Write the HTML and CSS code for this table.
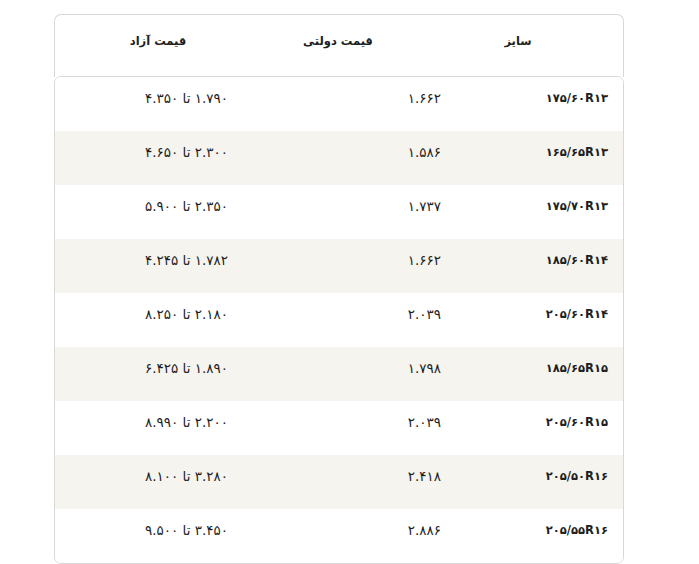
FILE: index.html
```html
<!DOCTYPE html>
<html lang="fa" dir="rtl">
<head>
<meta charset="utf-8">
<title>قیمت لاستیک</title>
<link rel="stylesheet" href="styles.css">
</head>
<body>
<div class="wrap">
  <div class="head">
    <div class="hcell">سایز</div>
    <div class="hcell">قیمت دولتی</div>
    <div class="hcell">قیمت آزاد</div>
  </div>
  <div class="tbody">
    <div class="row"><div class="cell size"><span class="ltr">۱۷۵/۶۰R۱۳</span></div><div class="cell">۱.۶۶۲</div><div class="cell">۱.۷۹۰ تا ۴.۳۵۰</div></div>
    <div class="row alt"><div class="cell size"><span class="ltr">۱۶۵/۶۵R۱۳</span></div><div class="cell">۱.۵۸۶</div><div class="cell">۲.۳۰۰ تا ۴.۶۵۰</div></div>
    <div class="row"><div class="cell size"><span class="ltr">۱۷۵/۷۰R۱۳</span></div><div class="cell">۱.۷۳۷</div><div class="cell">۲.۳۵۰ تا ۵.۹۰۰</div></div>
    <div class="row alt"><div class="cell size"><span class="ltr">۱۸۵/۶۰R۱۴</span></div><div class="cell">۱.۶۶۲</div><div class="cell">۱.۷۸۲ تا ۴.۲۴۵</div></div>
    <div class="row"><div class="cell size"><span class="ltr">۲۰۵/۶۰R۱۴</span></div><div class="cell">۲.۰۳۹</div><div class="cell">۲.۱۸۰ تا ۸.۲۵۰</div></div>
    <div class="row alt"><div class="cell size"><span class="ltr">۱۸۵/۶۵R۱۵</span></div><div class="cell">۱.۷۹۸</div><div class="cell">۱.۸۹۰ تا ۶.۴۲۵</div></div>
    <div class="row"><div class="cell size"><span class="ltr">۲۰۵/۶۰R۱۵</span></div><div class="cell">۲.۰۳۹</div><div class="cell">۲.۲۰۰ تا ۸.۹۹۰</div></div>
    <div class="row alt"><div class="cell size"><span class="ltr">۲۰۵/۵۰R۱۶</span></div><div class="cell">۲.۴۱۸</div><div class="cell">۳.۲۸۰ تا ۸.۱۰۰</div></div>
    <div class="row"><div class="cell size"><span class="ltr">۲۰۵/۵۵R۱۶</span></div><div class="cell">۲.۸۸۶</div><div class="cell">۳.۴۵۰ تا ۹.۵۰۰</div></div>
  </div>
</div>
</body>
</html>
```
FILE: styles.css
```css
html, body {
  margin: 0;
  padding: 0;
  background: #ffffff;
}
body {
  font-family: "DejaVu Sans", "Noto Sans", sans-serif;
  color: #1e1e1e;
}
.wrap {
  width: 570px;
  margin: 14px 75px 0 54px;
  box-sizing: border-box;
}
.head {
  display: grid;
  grid-template-columns: 210px 150px 210px;
  height: 63px;
  border: 1px solid #d8d8d8;
  border-bottom: none;
  border-radius: 7px 7px 0 0;
  box-sizing: border-box;
}
.hcell {
  text-align: center;
  font-size: 11.5px;
  font-weight: bold;
  line-height: 20px;
  padding-top: 16px;
}
.tbody {
  margin-top: -1px;
  border: 1px solid #d8d8d8;
  border-radius: 7px;
  overflow: hidden;
}
.row {
  display: grid;
  grid-template-columns: 167px 213px 1fr;
  height: 54px;
  background: #ffffff;
}
.row.alt {
  background: #f5f4ef;
}
.cell {
  text-align: right;
  padding-right: 15px;
  padding-top: 11px;
  font-size: 13.5px;
  line-height: 20px;
}
.cell.size {
  font-weight: bold;
  font-size: 11.5px;
}
.ltr {
  direction: ltr;
  unicode-bidi: isolate;
  display: inline-block;
}
```
